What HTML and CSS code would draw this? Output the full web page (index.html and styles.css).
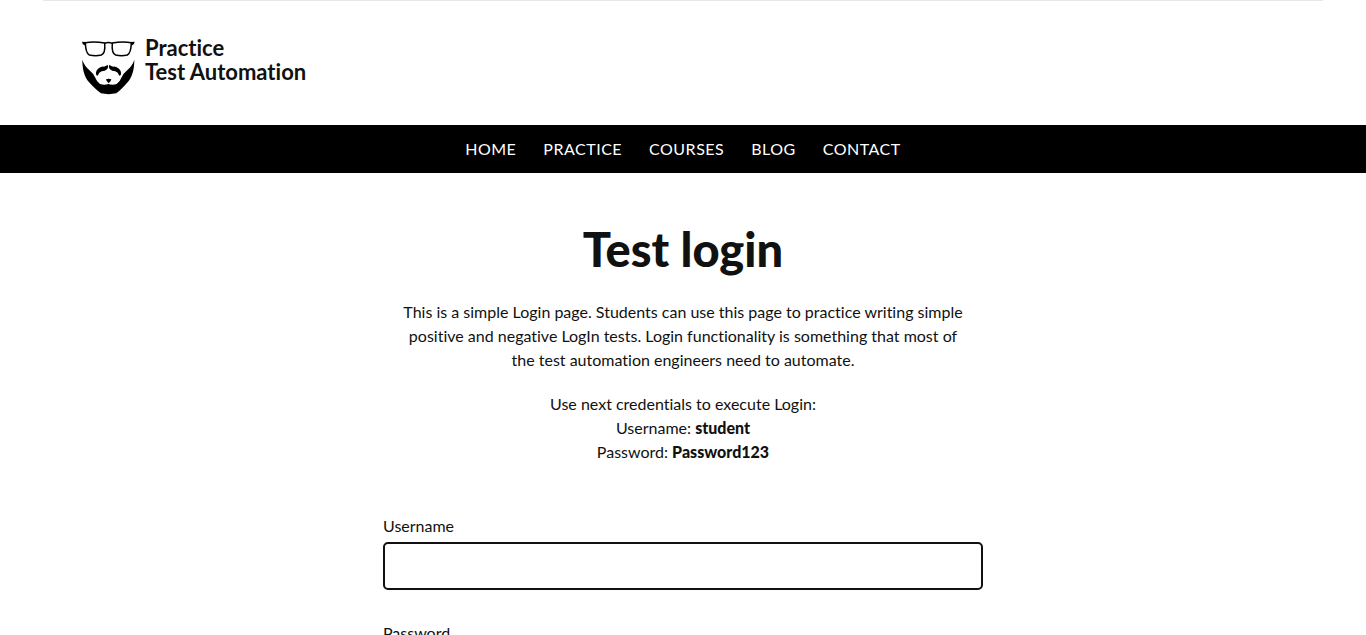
FILE: index.html
```html
<!DOCTYPE html>
<html lang="en">
<head>
<meta charset="utf-8">
<meta name="viewport" content="width=device-width, initial-scale=1">
<title>Test Login | Practice Test Automation</title>
<link rel="stylesheet" href="styles.css">
</head>
<body>
<header>
  <div class="brand-bar">
    <a class="brand" href="#">
      <svg class="brand-mark" viewBox="30 30 168 168" aria-hidden="true">
        <g fill="none" stroke="#000" stroke-width="4.5" stroke-linejoin="round">
          <path d="M46 38Q73 33 104 39Q107 70 94 75Q77 79 58 75Q47 69 46 38Z"/>
          <path d="M184 38Q157 33 127 39Q124 70 137 75Q154 79 172 75Q183 69 184 38Z"/>
          <path d="M104 40Q115 35 127 40"/>
        </g>
        <path d="M36 35L48 36L46 47L38 42ZM194 35L182 36L184 47L192 42Z"/>
        <path d="M37 89Q43 108 60 122Q70 130 75 142Q80 155 90 162Q103 167 115 162Q127 167 140 162Q150 155 155 142Q160 130 170 122Q187 108 193 89C193 116 188 136 176 153Q155 178 139 190Q116 195 93 190Q76 178 54 153C42 136 37 116 37 89Z"/>
        <path d="M113 104Q116 110 112 117Q105 124 95 124Q87 126 83 137Q78 137 78 132Q77 122 86 115Q94 109 101 110Q108 109 113 104ZM118 104Q115 110 119 117Q126 124 136 124Q144 126 148 137Q153 137 153 132Q154 122 145 115Q137 109 130 110Q123 109 118 104Z"/>
        <path d="M108 148Q116 145 124 148Q123 155 116 160Q109 155 108 148Z"/>
      </svg>
      <span class="brand-name">Practice<br>Test Automation</span>
    </a>
  </div>
  <nav class="menu" aria-label="Main">
    <a href="#">HOME</a>
    <a href="#">PRACTICE</a>
    <a href="#">COURSES</a>
    <a href="#">BLOG</a>
    <a href="#">CONTACT</a>
  </nav>
</header>
<main class="content">
  <h1>Test login</h1>
  <p class="intro">This is a simple Login page. Students can use this page to practice writing simple positive and negative LogIn tests. Login functionality is something that most of the test automation engineers need to automate.</p>
  <p class="intro">Use next credentials to execute Login:<br>Username: <b>student</b><br>Password: <b>Password123</b></p>
  <form class="login">
    <div class="field">
      <label for="username">Username</label>
      <input type="text" id="username" name="username">
    </div>
    <div class="field">
      <label for="password">Password</label>
      <input type="password" id="password" name="password">
    </div>
  </form>
</main>
</body>
</html>
```
FILE: styles.css
```css
* {
  box-sizing: border-box;
}

body {
  margin: 0;
  height: 100vh;
  overflow: hidden;
  background: #fff;
  color: #111;
  font: 16px/24px Lato, sans-serif;
  font-variant-ligatures: none;
}

.brand-bar {
  max-width: 1280px;
  margin: 0 auto;
  padding: 35px 37px 29px;
  border-top: 1px solid #e8e8e8;
}

.brand {
  display: inline-flex;
  gap: 9px;
  color: #111;
  text-decoration: none;
  vertical-align: top;
}

.brand-mark {
  width: 56px;
  height: 56px;
  margin: 4px 0 0;
}

.brand-name {
  font-size: 22px;
  font-weight: 700;
}

.menu {
  display: flex;
  flex-wrap: wrap;
  justify-content: center;
  gap: 27px;
  padding: 12px 16px;
  background: #000;
}

.menu a {
  color: #fff;
  letter-spacing: 0.5px;
  text-decoration: none;
}

.content {
  max-width: 600px;
  margin: 0 auto;
  padding-top: 46px;
}

h1 {
  margin: 0 0 21px;
  font-size: 47px;
  line-height: 60px;
  font-weight: 900;
  text-align: center;
}

.intro {
  margin: 0 0 20px;
  padding: 0 20px;
  text-align: center;
}

b {
  font-weight: 900;
}

.login {
  display: grid;
  gap: 31px;
  padding-top: 30px;
}

.field {
  display: grid;
  gap: 4px;
}

.field input {
  width: 100%;
  height: 48px;
  padding: 8px 12px;
  border: 2px solid #111;
  border-radius: 5px;
  background: #fff;
  color: #111;
  font: inherit;
}
```
